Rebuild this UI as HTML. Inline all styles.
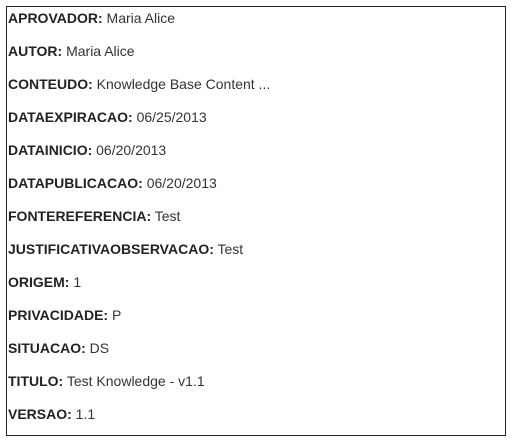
<!DOCTYPE html>
<html><head><style>
html,body{margin:0;padding:0;background:#fff;width:518px;height:442px;overflow:hidden}
.box{position:absolute;left:6px;top:6px;width:500px;height:430px;border:1px solid #222;box-sizing:border-box}
.r{position:absolute;left:1px;font-family:"Liberation Sans",sans-serif;font-size:14px;color:#333;white-space:nowrap;line-height:16px}
b{color:#222}
</style></head><body><div class="box">
<div class="r" style="top:3px"><b>APROVADOR:</b> Maria Alice</div>
<div class="r" style="top:36px"><b>AUTOR:</b> Maria Alice</div>
<div class="r" style="top:69px"><b>CONTEUDO:</b> Knowledge Base Content ...</div>
<div class="r" style="top:102px"><b>DATAEXPIRACAO:</b> 06/25/2013</div>
<div class="r" style="top:135px"><b>DATAINICIO:</b> 06/20/2013</div>
<div class="r" style="top:168px"><b>DATAPUBLICACAO:</b> 06/20/2013</div>
<div class="r" style="top:201px"><b>FONTEREFERENCIA:</b> Test</div>
<div class="r" style="top:234px"><b>JUSTIFICATIVAOBSERVACAO:</b> Test</div>
<div class="r" style="top:267px"><b>ORIGEM:</b> 1</div>
<div class="r" style="top:300px"><b>PRIVACIDADE:</b> P</div>
<div class="r" style="top:333px"><b>SITUACAO:</b> DS</div>
<div class="r" style="top:366px"><b>TITULO:</b> Test Knowledge - v1.1</div>
<div class="r" style="top:399px"><b>VERSAO:</b> 1.1</div>
</div></body></html>
